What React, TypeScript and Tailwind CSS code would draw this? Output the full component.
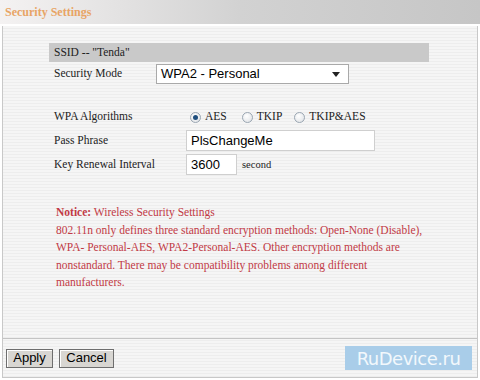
export default function App() {
  return (
    <div className="w-[480px] h-[380px] bg-white overflow-hidden font-['Liberation_Serif',serif] text-[11.5px] text-[#222]">
      <div className="h-[24px] flex items-center pl-[5px] bg-[linear-gradient(90deg,#f4f2f2,#d2d2d2_50%,#c6c6c6)]">
        <span className="font-bold text-[12px] text-[#e8a465]">Security Settings</span>
      </div>
      <div className="h-[2px] bg-white" />
      <div className="mx-[2px] h-[352px] border-x border-b border-[#c8c8c8] bg-[#f3f3f3] bg-[repeating-linear-gradient(180deg,#f5f5f5_0px,#f5f5f5_2px,#ededed_2px,#ededed_3px)] flex flex-col">
        <div className="h-[313px] border-b border-[#c4c4c4] pl-[46px] pt-[17px]">
          <div className="w-[380px] h-[19px] bg-[#c9c9c9] flex items-center pl-[5px]">SSID -- "Tenda"</div>
          <div className="flex items-center mt-[2px] h-[20px]">
            <span className="w-[107px] pl-[5px]">Security Mode</span>
            <div className="w-[193px] h-[20px] bg-white border border-[#a9a9a9] flex items-center justify-between pl-[4px] pr-[8px] font-['Liberation_Sans',sans-serif] text-[13px] text-black">
              <span>WPA2 - Personal</span>
              <svg width="8" height="5" viewBox="0 0 8 5"><path d="M0 0h8L4 5z" fill="#222" /></svg>
            </div>
          </div>
          <div className="flex items-center mt-[24px] h-[18px]">
            <span className="w-[141px] pl-[5px]">WPA Algorithms</span>
            <Radio checked label="AES" />
            <span className="w-[15px]" />
            <Radio label="TKIP" />
            <span className="w-[12px]" />
            <Radio label="TKIP&AES" />
          </div>
          <div className="flex items-center mt-[4px] h-[21px]">
            <span className="w-[137px] pl-[5px]">Pass Phrase</span>
            <div className="w-[189px] h-[21px] bg-white border border-[#cfcfcf] flex items-center pl-[4px] font-['Liberation_Sans',sans-serif] text-[13px] text-black">PlsChangeMe</div>
          </div>
          <div className="flex items-center mt-[3px] h-[21px]">
            <span className="w-[137px] pl-[5px]">Key Renewal Interval</span>
            <div className="w-[51px] h-[21px] bg-white border border-[#cfcfcf] flex items-center pl-[4px] font-['Liberation_Sans',sans-serif] text-[13px] text-black">3600</div>
            <span className="ml-[5px] text-[10.5px]">second</span>
          </div>
          <div className="mt-[29px] pl-[7px] w-[378px] text-[#c23a45] leading-[17.5px] text-[11.5px]">
            <div><b>Notice:</b> Wireless Security Settings</div>
            <div>802.11n only defines three standard encryption methods: Open-None (Disable), WPA- Personal-AES, WPA2-Personal-AES. Other encryption methods are nonstandard. There may be compatibility problems among different manufacturers.</div>
          </div>
        </div>
        <div className="flex items-center pl-[3px] pr-[5px] flex-1">
          <Btn w="w-[47px]">Apply</Btn>
          <span className="w-[6px]" />
          <Btn w="w-[55px]">Cancel</Btn>
          <div className="ml-auto w-[127px] h-[24px] bg-[#a9cde9] flex items-center justify-center font-['DejaVu_Sans',sans-serif] text-[18px] text-[#f2f8fc] tracking-[-0.5px]">RuDevice.ru</div>
        </div>
      </div>
    </div>
  );
}

function Radio({ checked, label }: { checked?: boolean; label: string }) {
  return (
    <span className="flex items-center gap-[4px]">
      <span className="w-[11px] h-[11px] rounded-full border border-[#9aa6b2] bg-[radial-gradient(circle_at_40%_35%,#ffffff,#dcdfe3)] flex items-center justify-center">
        {checked && <span className="w-[5px] h-[5px] rounded-full bg-[#1e4e7e]" />}
      </span>
      <span>{label}</span>
    </span>
  );
}

function Btn({ children, w }: { children: string; w: string }) {
  return (
    <div className={`${w} h-[19px] bg-[#d8d6d2] border border-[#6e6e6e] shadow-[inset_1px_1px_0_#fff] flex items-center justify-center font-['Liberation_Sans',sans-serif] text-[13px] text-black`}>
      {children}
    </div>
  );
}
